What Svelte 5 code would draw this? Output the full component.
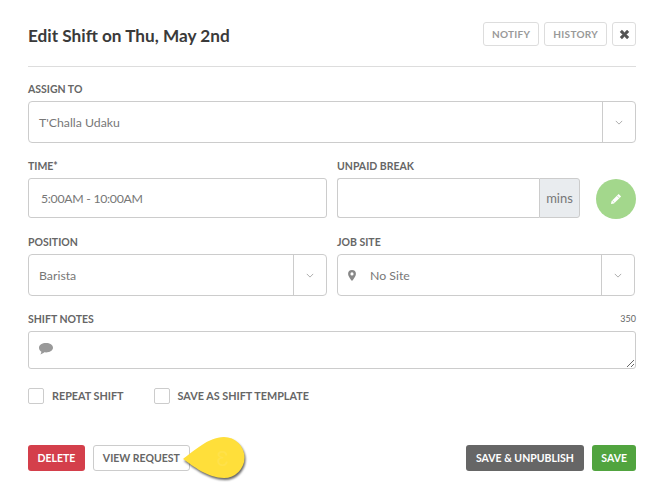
<script>
	let title = "Edit Shift on Thu, May 2nd"
</script>

<div class="modal">
	<header>
		<h1>{title}</h1>
		<div class="tools">
			<button class="ghost">NOTIFY</button>
			<button class="ghost">HISTORY</button>
			<button class="ghost close" aria-label="Close">
				<svg viewBox="0 0 12 12" width="11" height="11"><path d="M1.200 3.200 3.200 1.200 6 4 8.800 1.200 10.800 3.200 8 6l2.800 2.800-2 2L6 8l-2.800 2.800-2-2L4 6z" fill="#555" stroke="#555" stroke-width=".6" stroke-linejoin="round"/></svg>
			</button>
		</div>
	</header>

	<div class="field first">
		<span class="label">ASSIGN TO</span>
		<div class="select">
			<span class="value">T'Challa Udaku</span>
			<span class="caret"><svg viewBox="0 0 10 6" width="8" height="5"><path d="M1 1l4 4 4-4" fill="none" stroke="#999" stroke-width="1"/></svg></span>
		</div>
	</div>

	<div class="row time-row">
		<div class="field">
			<span class="label">TIME*</span>
			<input class="time" value="5:00AM - 10:00AM" />
		</div>
		<div class="field">
			<span class="label">UNPAID BREAK</span>
			<div class="group">
				<input />
				<span class="addon">mins</span>
			</div>
		</div>
		<button class="edit" aria-label="Edit">
			<svg viewBox="0 0 12 12" width="12" height="12">
				<path d="M8.600.9 11.100 3.400 4 10.500 1 11.100l.6-3z" fill="#fff"/>
				<path d="M7 2.700 9.400 5.100M2.400 7.600 4.500 9.700" fill="none" stroke="#a3d78c" stroke-width=".6"/>
			</svg>
		</button>
	</div>

	<div class="row pos-row">
		<div class="field">
			<span class="label">POSITION</span>
			<div class="select">
				<span class="value">Barista</span>
				<span class="caret"><svg viewBox="0 0 10 6" width="8" height="5"><path d="M1 1l4 4 4-4" fill="none" stroke="#999" stroke-width="1"/></svg></span>
			</div>
		</div>
		<div class="field">
			<span class="label">JOB SITE</span>
			<div class="select">
				<svg class="pin" viewBox="0 0 10 14" width="8" height="11"><path fill-rule="evenodd" d="M5 0a5 5 0 0 1 5 5c0 2.500-3 6.500-5 9-2-2.500-5-6.500-5-9a5 5 0 0 1 5-5zm0 3a2 2 0 1 0 0 4 2 2 0 0 0 0-4z" fill="#888"/></svg>
				<span class="value site">No Site</span>
				<span class="caret"><svg viewBox="0 0 10 6" width="8" height="5"><path d="M1 1l4 4 4-4" fill="none" stroke="#999" stroke-width="1"/></svg></span>
			</div>
		</div>
	</div>

	<div class="field notes">
		<div class="notes-head">
			<span class="label">SHIFT NOTES</span>
			<span class="count">350</span>
		</div>
		<div class="notes-box">
			<textarea></textarea>
			<svg class="bubble" viewBox="0 0 14 12" width="14" height="12"><path d="M7 0c3.800 0 7 2 7 4.700S10.800 9.400 7 9.400c-.6 0-1.100 0-1.700-.1C4.200 10.300 2.800 11.200 1.300 11.500c.6-.8 1-1.700 1.100-2.800C.9 7.900 0 6.400 0 4.700 0 2 3.200 0 7 0z" fill="#999"/></svg>
		</div>
	</div>

	<div class="checks">
		<label><span class="box"></span>REPEAT SHIFT</label>
		<label><span class="box"></span>SAVE AS SHIFT TEMPLATE</label>
	</div>

	<footer>
		<button class="btn red">DELETE</button>
		<button class="btn outline">VIEW REQUEST</button>
		<span class="spacer"></span>
		<button class="btn grey">SAVE &amp; UNPUBLISH</button>
		<button class="btn green">SAVE</button>

		<div class="callout">
			<svg viewBox="0 0 72 56" width="72" height="56"><path d="M5 29C15 22 30 7 46 7a20.500 20.500 0 0 1 0 41C30 48 15 36 5 29z" fill="#ffdf3a"/></svg>
			<span class="step">3</span>
		</div>
	</footer>
</div>

<style>
	:global(body) {
		background: #fff;
	}

	.modal {
		box-sizing: border-box;
		width: 664px;
		height: 500px;
		padding: 22px 28px 0;
		font-family: "Lato", "Open Sans", sans-serif;
		color: #666;
	}

	header {
		display: flex;
		justify-content: space-between;
		height: 44px;
		border-bottom: 1px solid #ddd;
	}

	h1 {
		margin: 5px 0 0;
		font-size: 17.200px;
		line-height: 18px;
		font-weight: 700;
		color: #3a3a3a;
	}

	.tools {
		display: flex;
		gap: 5px;
		height: 24px;
	}

	button {
		font-family: inherit;
		padding: 0;
	}

	.ghost {
		box-sizing: border-box;
		height: 24px;
		padding: 0 8px;
		background: #fff;
		border: 1px solid #ddd;
		border-radius: 3px;
		font-size: 10px;
		font-weight: 700;
		letter-spacing: .3px;
		color: #999;
	}

	.close {
		display: flex;
		align-items: center;
		justify-content: center;
		width: 24px;
		padding: 0;
	}

	.label {
		display: block;
		height: 14px;
		margin-bottom: 5px;
		font-size: 10.500px;
		line-height: 14px;
		font-weight: 700;
		color: #666;
	}

	.first {
		margin-top: 15px;
	}

	.select {
		box-sizing: border-box;
		display: flex;
		align-items: center;
		height: 42px;
		border: 1px solid #ccc;
		border-radius: 4px;
		background: #fff;
	}

	.value {
		flex: 1;
		padding-left: 10px;
		font-size: 12.300px;
		color: #777;
	}

	.value.site {
		padding-left: 14px;
	}

	.pin {
		margin-left: 10px;
	}

	.caret {
		display: flex;
		align-items: center;
		justify-content: center;
		width: 32px;
		height: 100%;
		border-left: 1px solid #ccc;
	}

	.row {
		display: grid;
	}

	.time-row {
		grid-template-columns: 299px 243px 40px;
		column-gap: 10px;
		margin-top: 16px;
	}

	.pos-row {
		grid-template-columns: 299px 298px;
		column-gap: 10px;
		margin-top: 17px;
	}

	input {
		box-sizing: border-box;
		width: 100%;
		height: 40px;
		border: 1px solid #ccc;
		border-radius: 3px;
		outline: none;
		font-family: inherit;
		font-size: 12.300px;
		color: #777;
	}

	.time {
		padding: 0 12px;
		letter-spacing: -.3px;
	}

	.group {
		display: flex;
	}

	.group input {
		flex: 1;
		min-width: 0;
		border-right: 0;
		border-radius: 3px 0 0 3px;
	}

	.addon {
		box-sizing: border-box;
		display: flex;
		align-items: center;
		justify-content: center;
		width: 41px;
		height: 40px;
		border: 1px solid #ccc;
		border-radius: 0 3px 3px 0;
		background: #e9ecef;
		font-size: 13px;
		color: #777;
	}

	.edit {
		display: flex;
		align-items: center;
		justify-content: center;
		width: 40px;
		height: 40px;
		margin: 20px 0 -1px 6px;
		border: 0;
		border-radius: 50%;
		background: #a3d78c;
	}

	.notes {
		margin-top: 16px;
	}

	.notes-head {
		display: flex;
		justify-content: space-between;
	}

	.count {
		font-size: 9px;
		line-height: 14px;
		color: #666;
	}

	.notes-box {
		position: relative;
		height: 38px;
	}

	textarea {
		box-sizing: border-box;
		display: block;
		width: 100%;
		height: 38px;
		border: 1px solid #ccc;
		border-radius: 3px;
		outline: none;
		resize: vertical;
	}

	.bubble {
		position: absolute;
		left: 11px;
		top: 12px;
	}

	.checks {
		display: flex;
		gap: 30px;
		margin-top: 18px;
	}

	.checks label {
		display: flex;
		align-items: center;
		gap: 8px;
		height: 17px;
		font-size: 10.800px;
		font-weight: 700;
		color: #666;
	}

	.box {
		box-sizing: border-box;
		width: 16px;
		height: 16px;
		border: 1px solid #ccc;
		border-radius: 2px;
	}

	footer {
		position: relative;
		display: flex;
		gap: 8px;
		margin-top: 41px;
	}

	.spacer {
		flex: 1;
	}

	.btn {
		box-sizing: border-box;
		height: 26px;
		padding: 0 9px;
		border: 0;
		border-radius: 3px;
		font-size: 10.500px;
		font-weight: 700;
		color: #fff;
	}

	.red {
		background: #d43f4b;
		padding: 0 9.500px;
	}

	.outline {
		background: #fff;
		border: 1px solid #ccc;
		color: #666;
	}

	.grey {
		background: #666;
		padding: 0 10.500px;
	}

	.green {
		background: #51a43f;
	}

	.callout {
		position: absolute;
		left: 150px;
		top: -15px;
		width: 72px;
		height: 56px;
		filter: drop-shadow(1px 2px 1px rgba(0, 0, 0, .6));
	}

	.callout svg {
		display: block;
	}

	.step {
		position: absolute;
		left: 38px;
		top: 16px;
		font-size: 22px;
		line-height: 24px;
		font-weight: 400;
		color: #ffe14a;
		transform: scaleX(-1);
	}
</style>
